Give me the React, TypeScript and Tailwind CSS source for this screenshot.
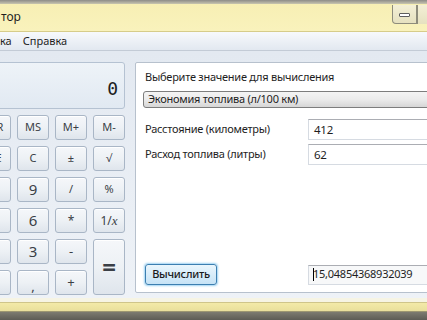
import React from "react";

const font = { fontFamily: '"Noto Sans", "Open Sans", Arial, sans-serif' };

type Btn = { t: React.ReactNode; cls?: string };

function CalcButton({ t, cls = "" }: Btn) {
  return (
    <div
      className={`flex items-center justify-center rounded-[3px] border border-[#a9b6c6] bg-gradient-to-b from-[#f5f7fa] via-[#edf1f5] to-[#dfe5ec] text-[#3a3f46] shadow-[inset_0_1px_0_#ffffff] ${cls}`}
    >
      {t}
    </div>
  );
}

export default function App() {
  const rows: Btn[][] = [
    [{ t: "MR" }, { t: "MS", cls: "text-[11px]" }, { t: "M+", cls: "text-[11px]" }, { t: "M-", cls: "text-[11px]" }],
    [{ t: "CE" }, { t: "C", cls: "text-[11px]" }, { t: "±", cls: "text-[11px]" }, { t: "√", cls: "text-[11px]" }],
    [{ t: "8" }, { t: "9", cls: "text-[15px]" }, { t: "/", cls: "text-[11px]" }, { t: "%", cls: "text-[11px]" }],
    [{ t: "5" }, { t: "6", cls: "text-[15px]" }, { t: "*", cls: "text-[12px]" }, { t: (<span className="text-[12px]">1/<span style={{ fontFamily: '"Liberation Serif", serif' }} className="italic text-[13px]">x</span></span>) }],
  ];

  return (
    <div className="relative h-[320px] w-[427px] overflow-hidden bg-[#6d6c64]" style={font}>
      <div className="flex h-full flex-col">
        {/* top frame line */}
        <div className="h-[4px] bg-gradient-to-b from-[#8d8c88] to-[#c9c6b0]" />
        {/* title bar */}
        <div className="flex h-[28px] justify-between border-b border-[#d6cc8a] bg-gradient-to-b from-[#f7efb4] to-[#f9f2bc]">
          <div className="flex items-center pb-[2px] pl-[1px] text-[12px] text-[#1e1e1e]">тор</div>
          <div className="flex h-[20px] items-start">
            <div className="mt-[1px] flex h-[19px] w-[25px] items-center justify-center rounded-bl-[4px] border border-t-0 border-[#8e8c7c] bg-gradient-to-b from-[#f3efd6] to-[#e6e1c0]">
              <div className="mt-[2px] h-[4px] w-[11px] rounded-[1px] border border-[#5e5e5e] bg-white" />
            </div>
            <div className="mt-[1px] h-[19px] w-[10px] border-l border-[#8e8c7c] bg-gradient-to-b from-[#f3efd6] to-[#e6e1c0]" />
          </div>
        </div>
        {/* menu bar */}
        <div className="flex h-[19px] items-center gap-[11px] border-b border-[#c3cbd6] bg-gradient-to-b from-[#f7f9fc] to-[#e2e8f0] text-[11px] text-[#1e1e1e]">
          <span>ка</span>
          <span>Справка</span>
        </div>
        {/* body */}
        <div className="flex h-[247px] gap-[10px] bg-gradient-to-b from-[#e3e9f1] to-[#eef2f7] pt-[11px]">
          {/* calculator */}
          <div className="ml-[-21px] flex w-[146px] shrink-0 flex-col gap-[6px]">
            <div className="flex h-[47px] items-center justify-end rounded-[3px] border border-[#b5c2d2] bg-gradient-to-b from-[#eef3f8] to-[#e1e9f2] pr-[6px] pt-[6px]">
              <span className="text-[18px] text-[#202020]" style={{ fontFamily: '"DejaVu Sans Mono", monospace' }}>0</span>
            </div>
            <div className="grid grid-cols-[32px_32px_32px_32px] grid-rows-[25px_25px_25px_25px_25px_25px] gap-[6px]">
              {rows.map((r, i) =>
                r.map((b, j) => <CalcButton key={`${i}-${j}`} t={b.t} cls={b.cls ?? "text-[11px]"} />)
              )}
              <CalcButton t="2" />
              <CalcButton t="3" cls="text-[15px]" />
              <CalcButton t="-" cls="text-[13px]" />
              <CalcButton t={<span className="text-[24px] font-bold leading-none">=</span>} cls="row-span-2" />
              <CalcButton t="0" />
              <CalcButton t={<span className="mt-[8px] text-[13px]">,</span>} />
              <CalcButton t="+" cls="text-[13px]" />
            </div>
          </div>
          {/* unit conversion panel */}
          <div className="flex h-[231px] w-[310px] shrink-0 flex-col rounded-[2px] border border-[#b7c1cd] bg-white pl-[7px] text-[11px] tracking-[-0.25px] text-[#1e1e1e]">
            <div className="mt-[6px] pl-[2px] leading-[16px]">Выберите значение для вычисления</div>
            <div className="mt-[6px] flex h-[17px] items-center rounded-[3px] border border-[#7d7d7d] bg-gradient-to-b from-[#f4f4f4] via-[#ebebeb] to-[#d6d6d6] pl-[4px]">
              Экономия топлива (л/100 км)
            </div>
            <div className="mt-[11px] flex h-[21px] items-center">
              <span className="w-[165px] pl-[2px]">Расстояние (километры)</span>
              <div className="flex h-[21px] flex-1 items-center border border-[#d6dbe2] border-t-[#abadb3] bg-white pl-[5px] text-[11.5px]">412</div>
            </div>
            <div className="mt-[4px] flex h-[21px] items-center">
              <span className="w-[165px] pl-[2px]">Расход топлива (литры)</span>
              <div className="flex h-[21px] flex-1 items-center border border-[#d6dbe2] border-t-[#abadb3] bg-white pl-[5px] text-[11.5px]">62</div>
            </div>
            <div className="mt-auto mb-[7px] flex h-[21px] items-center">
              <div className="ml-[2px] flex h-[21px] w-[72px] items-center justify-center rounded-[3px] border border-[#3c7fb1] bg-gradient-to-b from-[#eaf6fd] to-[#c6e3f6] font-medium text-[#1a1a1a] shadow-[0_0_2px_1px_#9fd3f3]">
                Вычислить
              </div>
              <div className="ml-[91px] flex h-[20px] flex-1 items-center border border-[#d6dbe2] border-t-[#abadb3] bg-[#f7f8f9] pl-[4px]">
                <span className="mr-[-1px] h-[13px] w-[1px] bg-black" />
                15,04854368932039
              </div>
            </div>
          </div>
        </div>
        {/* bottom frame */}
        <div className="h-[4px] bg-[#f6f4e4]" />
        <div className="h-[9px] border-t border-[#cfc58a] bg-gradient-to-b from-[#f3eaa8] to-[#e9df9c]" />
        <div className="h-[1px] bg-[#9c9671]" />
        <div className="flex-1 bg-gradient-to-b from-[#7d7b70] to-[#5d5c55]" />
      </div>
    </div>
  );
}
